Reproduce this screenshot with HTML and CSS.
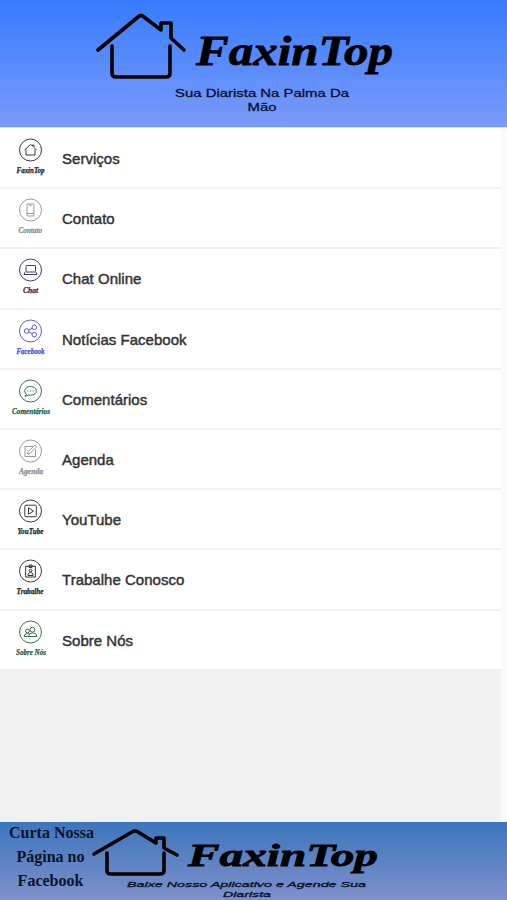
FILE: index.html
```
<!DOCTYPE html>
<html lang="pt-BR">

  <head>
    <meta charset="UTF-8">
    <title>FaxinTop</title>
    <link rel="stylesheet" href="styles.css">
  </head>

  <body>
    <header class="header">
      <svg class="banner" viewBox="0 0 507 127">
        <g class="house">
          <path d="M98 50L138 17Q141 14 144 17L161 30V23H171V38L184 50" />
          <path d="M112 46V73Q112 77 116 77H166Q170 77 170 73V46" />
        </g>
        <text class="logo" x="196" y="65" font-size="43" textLength="197" lengthAdjust="spacingAndGlyphs">FaxinTop</text>
        <text class="slogan" x="175" y="97" font-size="11.5" textLength="174" lengthAdjust="spacingAndGlyphs">Sua Diarista Na Palma Da</text>
        <text class="slogan" x="247.5" y="111" font-size="11.5" textLength="29" lengthAdjust="spacingAndGlyphs">Mão</text>
      </svg>
    </header>

    <main class="content">
      <ul class="menu">
        <li class="item">
          <svg class="icon black" viewBox="0 0 62 60">
            <circle cx="30.5" cy="22" r="11" />
            <path d="M24.5 22L30.5 16.5L32.5 18V17H34V19.5L36.5 22M26 21.5V27H35V21.5" />
            <text x="16.5" y="45" textLength="28" lengthAdjust="spacingAndGlyphs">FaxinTop</text>
          </svg>
          <span class="label">Serviços</span>
        </li>
        <li class="item">
          <svg class="icon gray" viewBox="0 0 62 60">
            <circle cx="30.5" cy="22" r="11" />
            <rect x="27" y="16" width="7" height="12" rx="1" />
            <path d="M27 25.5H34M29.5 17.5H31.5" />
            <text x="18.5" y="45" textLength="23.5" lengthAdjust="spacingAndGlyphs">Contato</text>
          </svg>
          <span class="label">Contato</span>
        </li>
        <li class="item">
          <svg class="icon navy" viewBox="0 0 62 60">
            <circle cx="30.5" cy="22" r="11" />
            <rect x="26" y="17.5" width="9.5" height="6.5" rx="0.5" />
            <path d="M25 24L24 26.5H37L36 24" />
            <text x="23" y="45" textLength="15" lengthAdjust="spacingAndGlyphs">Chat</text>
          </svg>
          <span class="label">Chat Online</span>
        </li>
        <li class="item">
          <svg class="icon blue" viewBox="0 0 62 60">
            <circle cx="30.5" cy="22" r="11" />
            <circle cx="26.7" cy="22" r="2.3" />
            <circle cx="34.3" cy="18.3" r="2.3" />
            <circle cx="34.3" cy="25.7" r="2.3" />
            <path d="M28.8 21L32.2 19.3M28.8 23L32.2 24.7" />
            <text x="16.5" y="45" textLength="28" lengthAdjust="spacingAndGlyphs">Facebook</text>
          </svg>
          <span class="label">Notícias Facebook</span>
        </li>
        <li class="item">
          <svg class="icon green" viewBox="0 0 62 60">
            <circle cx="30.5" cy="22" r="11" />
            <path d="M26.5 25.3C22.5 22 25.5 17.5 30.5 17.5C38 17.5 38.5 26.2 30.5 26.2L28.8 26L25 27.5ZM27.5 22H28.5M30 22H31M32.5 22H33.5" />
            <text x="12" y="45" textLength="38" lengthAdjust="spacingAndGlyphs">Comentários</text>
          </svg>
          <span class="label">Comentários</span>
        </li>
        <li class="item">
          <svg class="icon gray" viewBox="0 0 62 60">
            <circle cx="30.5" cy="22" r="11" />
            <path d="M33 17.5H25V27.5H35.5V20.5M27.5 25L28.3 22.5L35 16L36.7 17.7L30 24.3Z" />
            <text x="19" y="45" textLength="24" lengthAdjust="spacingAndGlyphs">Agenda</text>
          </svg>
          <span class="label">Agenda</span>
        </li>
        <li class="item">
          <svg class="icon black" viewBox="0 0 62 60">
            <circle cx="30.5" cy="22" r="11" />
            <rect x="24.8" y="16.2" width="11.5" height="11.5" rx="1" />
            <path d="M28.5 18.8V25.2L33.5 22Z" />
            <text x="17.5" y="45" textLength="26" lengthAdjust="spacingAndGlyphs">YouTube</text>
          </svg>
          <span class="label">YouTube</span>
        </li>
        <li class="item">
          <svg class="icon black" viewBox="0 0 62 60">
            <circle cx="30.5" cy="22" r="11" />
            <rect x="25.7" y="17.3" width="9.6" height="10.7" />
            <path d="M29 18.5V16H32V18.5ZM28 26.5V25L30.5 23L33 25V26.5Z" />
            <circle cx="30.5" cy="21.5" r="1.4" />
            <text x="16.5" y="45" textLength="27" lengthAdjust="spacingAndGlyphs">Trabalhe</text>
          </svg>
          <span class="label">Trabalhe Conosco</span>
        </li>
        <li class="item">
          <svg class="icon green" viewBox="0 0 62 60">
            <circle cx="30.5" cy="22" r="11" />
            <circle cx="32.5" cy="19.7" r="2.4" />
            <circle cx="27.5" cy="21" r="1.9" />
            <path d="M28.5 26.5Q29 22.8 32.5 22.8Q36.5 22.8 37 26.5ZM28.5 26.5H24Q24.3 23.5 27.5 23.5L29 24" />
            <text x="16" y="45" textLength="30" lengthAdjust="spacingAndGlyphs">Sobre Nós</text>
          </svg>
          <span class="label">Sobre Nós</span>
        </li>
      </ul>
    </main>

    <footer class="footer">
      <p class="like">Curta Nossa<br>Página no<br>Facebook</p>
      <svg class="download" viewBox="92 0 415 78">
        <g class="house">
          <path d="M94 32L132 10Q135 8 138 10L156 21V16H164V26L177 33" />
          <path d="M107 31V49Q107 52 111 52H160Q164 52 164 49V31" />
        </g>
        <text class="logo" x="188" y="44" font-size="31" textLength="190" lengthAdjust="spacingAndGlyphs">FaxinTop</text>
        <text class="slogan slanted" x="127" y="65" font-size="8" textLength="239" lengthAdjust="spacingAndGlyphs">Baixe Nosso Aplicativo e Agende Sua</text>
        <text class="slogan slanted" x="223" y="74.5" font-size="8" textLength="48" lengthAdjust="spacingAndGlyphs">Diarista</text>
      </svg>
    </footer>
  </body>

</html>
```
FILE: styles.css
```
* {
  margin: 0;
  padding: 0;
  box-sizing: border-box;
}

body {
  display: flex;
  flex-direction: column;
  height: 900px;
  overflow: hidden;
  background: #fafafa;
  font-family: "Liberation Sans", Arial, sans-serif;
}

.header {
  flex: none;
  height: 128px;
  background: linear-gradient(#377cff, #7a9afa);
  border-bottom: 1px solid #d5defc;
}

.banner {
  display: block;
  width: 507px;
  height: 127px;
}

.house {
  fill: none;
  stroke: #000;
  stroke-width: 3.6;
  stroke-linecap: round;
  stroke-linejoin: round;
}

.logo {
  font-family: "Liberation Serif", serif;
  font-weight: bold;
  font-style: italic;
  stroke: #000;
  stroke-width: 0.8;
}

.slogan {
  fill: #0b1128;
  stroke: #0b1128;
  stroke-width: 0.3;
}

.slanted {
  font-style: italic;
}

.content {
  flex: 1;
  width: 501px;
  background: #f2f2f2;
}

.menu {
  padding-top: 1px;
  background: #fff;
  list-style: none;
}

.item {
  display: flex;
  align-items: center;
  height: 60.2px;
  border-bottom: 2px solid #f0f0f0;
}

.icon {
  flex: none;
  width: 62px;
  height: 60px;
  fill: none;
  stroke: currentColor;
  stroke-width: 0.9;
}

.icon text {
  fill: currentColor;
  stroke-width: 0.25;
  font-family: "Liberation Serif", serif;
  font-size: 8px;
  font-weight: bold;
  font-style: italic;
}

.black {
  color: #222;
}

.gray {
  color: #8c8c8c;
}

.navy {
  color: #2c2850;
}

.blue {
  color: #4a43e8;
}

.green {
  color: #235c3c;
}

.label {
  padding-top: 1px;
  color: #333;
  font-size: 15px;
  letter-spacing: 0.02px;
  -webkit-text-stroke: 0.45px #333;
}

.footer {
  display: flex;
  flex: none;
  height: 78px;
  background: linear-gradient(#3b76bd, #8090cb);
}

.like {
  width: 92px;
  margin-top: -1px;
  padding-left: 9px;
  color: #0c1328;
  font-family: "Liberation Serif", serif;
  font-size: 16px;
  font-weight: bold;
  line-height: 24px;
  text-align: center;
  white-space: nowrap;
}

.download {
  display: block;
  width: 415px;
  height: 78px;
}
```
